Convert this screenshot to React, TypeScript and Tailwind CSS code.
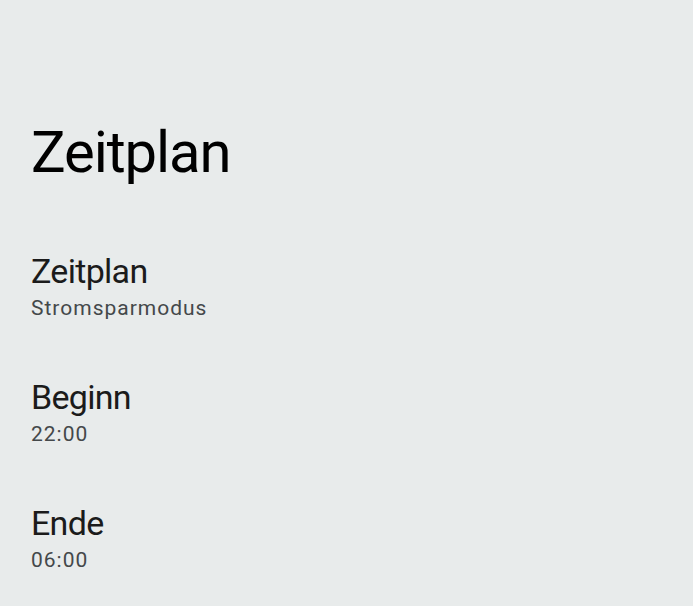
const items = [
  { title: "Zeitplan", value: "Stromsparmodus" },
  { title: "Beginn", value: "22:00" },
  { title: "Ende", value: "06:00" },
];

export default function App() {
  return (
    <div
      className="min-h-screen w-full bg-[#e8ebeb] pl-[31px] pt-[123px]"
      style={{ fontFamily: "Roboto, sans-serif" }}
    >
      <h1 className="text-[58px] leading-[58px] tracking-[-1.1px] font-normal text-black">Zeitplan</h1>
      <div className="mt-[70px] flex flex-col gap-[57px]">
        {items.map((item) => (
          <div key={item.title} className="flex flex-col">
            <span className="text-[34px] leading-[40px] tracking-[-0.7px] text-[#1b1b1b]">{item.title}</span>
            <span className="mt-[5px] text-[21px] leading-[24px] tracking-[1px] text-[#44484a]">{item.value}</span>
          </div>
        ))}
      </div>
    </div>
  );
}
